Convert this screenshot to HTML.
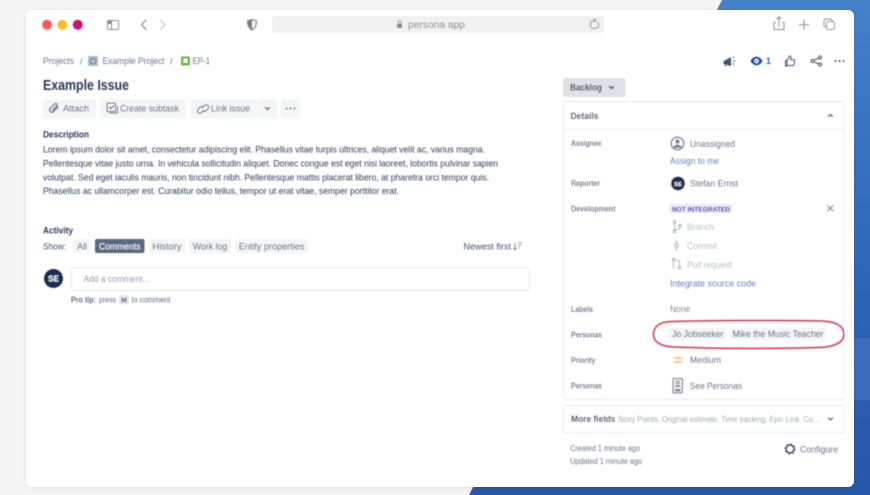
<!DOCTYPE html>
<html lang="en"><head><meta charset="utf-8"><title>persona app</title>
<style>
html,body{margin:0;padding:0;width:870px;height:495px;overflow:hidden;background:#f5f5f5}
svg{display:block;font-family:"Liberation Sans",Arial,sans-serif}
text{font-size:9px;fill:#253858}
.b{font-weight:700}
.g{fill:#6b778c}
.f{fill:#42526e}
.l{fill:#2f62c9}
.d{fill:#b3bac5}
.s{fill:none;stroke:#42526e;stroke-width:1;stroke-linecap:round;stroke-linejoin:round}
.t{fill:none;stroke:#8a8d91;stroke-width:1;stroke-linecap:round;stroke-linejoin:round}
.m{fill:none;stroke:#a5adba;stroke-width:1;stroke-linecap:round;stroke-linejoin:round}
</style></head><body>
<svg width="870" height="495" viewBox="0 0 870 495" xmlns="http://www.w3.org/2000/svg">
<defs>
<linearGradient id="bl" x1="0" y1="0" x2="0" y2="1"><stop offset="0" stop-color="#4480c8"/><stop offset=".55" stop-color="#2f66b8"/><stop offset="1" stop-color="#2656a8"/></linearGradient>
<filter id="soft" x="0" y="0" width="100%" height="100%"><feGaussianBlur stdDeviation="0.5"/></filter>
<filter id="sh" x="-5%" y="-5%" width="110%" height="110%"><feDropShadow dx="0" dy="1" stdDeviation="2" flood-color="#000" flood-opacity=".07"/></filter>
</defs>
<rect width="870" height="495" fill="#f5f5f5"/>
<polygon points="722,0 870,0 870,495 469,495" fill="url(#bl)"/>
<polygon points="854,338 870,338 870,400 854,400" fill="#4a79c4" opacity=".5"/>
<rect x="26" y="10" width="828" height="477" rx="6" fill="#fff" filter="url(#sh)"/>
<g filter="url(#soft)">
<!-- browser bar -->
<circle cx="47" cy="24.7" r="5" fill="#fc5c54"/><circle cx="62.3" cy="24.7" r="5" fill="#fbbb2e"/><circle cx="77.8" cy="24.7" r="5" fill="#c8176f"/>
<rect x="107.5" y="20.5" width="11" height="9" rx="1.5" class="t"/><rect x="108" y="21" width="3.5" height="3" fill="#8a8d91"/><path d="M111.5 21v8" class="t"/>
<path d="M146 20l-4.500 4.700 4.500 4.700" class="t" style="stroke-width:1.200"/><path d="M160.500 20l4.500 4.700-4.500 4.700" fill="none" stroke="#c4c6c9" stroke-width="1.200" stroke-linecap="round" stroke-linejoin="round"/>
<path d="M252 19.500l4.500 1.500c0 4-1 7-4.500 9-3.500-2-4.500-5-4.500-9z" fill="none" stroke="#7a7d80" stroke-width="1.100"/><path d="M252 19.500l-4.500 1.500c0 4 1 7 4.500 9z" fill="#7a7d80"/>
<rect x="272" y="16" width="332" height="17" rx="3" fill="#f2f2f2"/>
<rect x="397" y="23.500" width="5" height="4.500" rx=".8" fill="#85888c"/><path d="M398 23.500v-1.200a1.500 1.500 0 0 1 3 0v1.200" fill="none" stroke="#85888c" stroke-width=".8"/>
<text x="408" y="27.800" textLength="57" lengthAdjust="spacingAndGlyphs" style="fill:#808387;font-size:10px">persona app</text>
<path d="M597.800 22a4.200 4.200 0 1 1-3.300-1.700" class="t"/><path d="M594 18.500l2.200 1.800-2.200 1.900" class="t" style="stroke-width:.9"/>
<path d="M775.500 22.500h-1.500v7h10v-7h-1.500M779 26v-9M776.700 19l2.300-2.300 2.300 2.300" class="t"/>
<path d="M804 20v9.500M799.300 24.700h9.500" class="t"/>
<rect x="824" y="19" width="8" height="8" rx="2" class="t"/><rect x="826.500" y="21.500" width="8" height="8" rx="2" fill="#fff" stroke="#8a8d91"/>
<!-- breadcrumb -->
<text x="43" y="64" textLength="31" lengthAdjust="spacingAndGlyphs" class="g">Projects</text>
<text x="80" y="64.300" class="g">/</text>
<rect x="88" y="56" width="10" height="10" rx="1" fill="#7fd3ee"/><circle cx="93" cy="61" r="3" fill="none" stroke="#e0604f" stroke-width="1.600"/>
<text x="102.500" y="64" textLength="62" lengthAdjust="spacingAndGlyphs" class="g">Example Project</text>
<text x="170" y="64.300" class="g">/</text>
<rect x="181" y="56.500" width="9" height="9" rx="1" fill="#63ba3c"/><path d="M183.500 58.500h4v5l-2-1.300-2 1.300z" fill="#fff"/>
<text x="192.500" y="64" textLength="17.500" lengthAdjust="spacingAndGlyphs" class="g">EP-1</text>
<!-- right actions -->
<path d="M724 61.500l6.500-3.500v7.500l-6.500-2zM726 63.500l-.8 3M732.500 58l1.500-1M733 61h2M732.500 63.500l1.500 1" fill="#42526e" stroke="#42526e" stroke-width="1" stroke-linejoin="round"/>
<path d="M750.500 61c1.500-3 3.700-4.300 6-4.300s4.500 1.300 6 4.300c-1.500 3-3.700 4.300-6 4.300s-4.500-1.300-6-4.300z" fill="#1f4da8"/><circle cx="756.500" cy="61" r="2.200" fill="#fff"/><circle cx="756.500" cy="61" r="1" fill="#1f4da8"/>
<text x="766" y="64" textLength="5" lengthAdjust="spacingAndGlyphs" class="b" style="fill:#2f62c9">1</text>
<path d="M787 60.500h-1.500v5.500h1.500zM787 60.500l2.500-4.500c1.500 0 1.800 1 1.500 2l-.5 1.800h3.300c.8 0 1 .7.9 1.300l-.8 3.700c-.1.500-.5.700-1 .7h-6.400" class="s"/>
<circle cx="820" cy="57.500" r="1.500" class="s"/><circle cx="820" cy="64.500" r="1.500" class="s"/><circle cx="812.500" cy="61" r="1.500" class="s"/><path d="M814 60.200l4.700-2.200M814 61.800l4.700 2.200" class="s"/>
<circle cx="835.500" cy="61" r="1" fill="#42526e"/><circle cx="839.500" cy="61" r="1" fill="#42526e"/><circle cx="843.500" cy="61" r="1" fill="#42526e"/>
<!-- title -->
<text x="43" y="90" textLength="86" lengthAdjust="spacingAndGlyphs" style="font-size:14.500px;font-weight:700;fill:#2b3a5a">Example Issue</text>
<!-- toolbar -->
<rect x="43" y="99" width="53" height="19" rx="2" fill="#f4f5f7"/>
<path d="M58 107l-4.800 4.800a2.300 2.300 0 0 1-3.200-3.200l4.700-4.700a1.500 1.500 0 0 1 2.100 2.100l-4.300 4.300" class="s" style="stroke:#5e6c84;stroke-width:1.300"/>
<text x="63" y="111.700" textLength="26" lengthAdjust="spacingAndGlyphs" class="f">Attach</text>
<rect x="100" y="99" width="86" height="19" rx="2" fill="#f4f5f7"/>
<rect x="107" y="103" width="8.500" height="8.500" rx="1" class="s"/><path d="M109 107l1.800 1.800 3-3.300M117.500 106.500v6.500h-8" class="s"/>
<text x="120" y="111.700" textLength="59" lengthAdjust="spacingAndGlyphs" class="f">Create subtask</text>
<rect x="191" y="99" width="66" height="19" rx="2" fill="#f4f5f7"/><rect x="258" y="99" width="19" height="19" rx="2" fill="#f4f5f7"/>
<path d="M202.500 107.500l2-2a2.400 2.400 0 0 1 3.400 3.400l-2 2a2.400 2.400 0 0 1-3-.3M203.500 110.500l-2 2a2.400 2.400 0 0 1-3.400-3.400l2-2a2.400 2.400 0 0 1 3 .3" class="s"/>
<text x="211" y="111.700" textLength="39" lengthAdjust="spacingAndGlyphs" class="f">Link issue</text>
<path d="M265.500 107.500l2 2 2-2" class="s" style="stroke-width:1.300"/>
<rect x="281" y="99" width="19" height="19" rx="2" fill="#f4f5f7"/>
<circle cx="286.500" cy="108.500" r="1" fill="#42526e"/><circle cx="290.500" cy="108.500" r="1" fill="#42526e"/><circle cx="294.500" cy="108.500" r="1" fill="#42526e"/>
<!-- description -->
<text x="43" y="137.500" textLength="46" lengthAdjust="spacingAndGlyphs" class="b" style="fill:#2b3a5a">Description</text>
<text x="43" y="152.500" textLength="442" lengthAdjust="spacingAndGlyphs" style="font-size:8.800px;fill:#2f3d5a">Lorem ipsum dolor sit amet, consectetur adipiscing elit. Phasellus vitae turpis ultrices, aliquet velit ac, varius magna.</text>
<text x="43" y="166.500" textLength="455" lengthAdjust="spacingAndGlyphs" style="font-size:8.800px;fill:#2f3d5a">Pellentesque vitae justo urna. In vehicula sollicitudin aliquet. Donec congue est eget nisi laoreet, lobortis pulvinar sapien</text>
<text x="43" y="180.500" textLength="446" lengthAdjust="spacingAndGlyphs" style="font-size:8.800px;fill:#2f3d5a">volutpat. Sed eget iaculis mauris, non tincidunt nibh. Pellentesque mattis placerat libero, at pharetra orci tempor quis.</text>
<text x="43" y="194" textLength="356" lengthAdjust="spacingAndGlyphs" style="font-size:8.800px;fill:#2f3d5a">Phasellus ac ullamcorper est. Curabitur odio tellus, tempor ut erat vitae, semper porttitor erat.</text>
<!-- activity -->
<text x="43" y="233.300" textLength="30" lengthAdjust="spacingAndGlyphs" class="b" style="fill:#2b3a5a">Activity</text>
<text x="43" y="249.300" textLength="23" lengthAdjust="spacingAndGlyphs" class="f">Show:</text>
<rect x="73.500" y="239" width="17" height="14" rx="2" fill="#f4f5f7"/><text x="77" y="249.300" textLength="10" lengthAdjust="spacingAndGlyphs" class="f">All</text>
<rect x="95" y="239" width="49.500" height="14" rx="2" fill="#5a6885"/><text x="99" y="249.300" textLength="41.500" lengthAdjust="spacingAndGlyphs" style="fill:#fff">Comments</text>
<rect x="149" y="239" width="36" height="14" rx="2" fill="#f4f5f7"/><text x="152.500" y="249.300" textLength="29" lengthAdjust="spacingAndGlyphs" class="f">History</text>
<rect x="189" y="239" width="42" height="14" rx="2" fill="#f4f5f7"/><text x="192.800" y="249.300" textLength="34.500" lengthAdjust="spacingAndGlyphs" class="f">Work log</text>
<rect x="235" y="239" width="73" height="14" rx="2" fill="#f4f5f7"/><text x="238.800" y="249.300" textLength="65.500" lengthAdjust="spacingAndGlyphs" class="f">Entity properties</text>
<text x="463.500" y="249.300" textLength="47.500" lengthAdjust="spacingAndGlyphs" class="f">Newest first</text>
<path d="M515 243v6.500M513.300 248l1.700 1.800 1.700-1.800M518 243h4M518 245.500h3M518 248h1.500" fill="none" stroke="#6b778c" stroke-width=".8"/>
<circle cx="53.500" cy="278.500" r="9.500" fill="#1d2d54"/><text x="53.500" y="281.500" text-anchor="middle" class="b" style="fill:#fff;font-size:8px">SE</text>
<rect x="71.500" y="267.500" width="458" height="23" rx="2.500" fill="#fff" stroke="#e4e6ea"/>
<text x="83.500" y="282" textLength="66" lengthAdjust="spacingAndGlyphs" style="fill:#8993a4">Add a comment...</text>
<text x="71" y="302.500" textLength="25" lengthAdjust="spacingAndGlyphs" class="b" style="font-size:8px;fill:#5e6c84">Pro tip:</text>
<text x="99" y="302.500" textLength="17" lengthAdjust="spacingAndGlyphs" style="font-size:8px;fill:#5e6c84">press</text>
<rect x="119" y="295" width="10" height="9.500" rx="1.500" fill="#e6e8ec"/><text x="124" y="302.500" text-anchor="middle" class="b" style="font-size:7px;fill:#42526e">M</text>
<text x="131.500" y="302.500" textLength="39" lengthAdjust="spacingAndGlyphs" style="font-size:8px;fill:#5e6c84">to comment</text>
<!-- right column -->
<rect x="563" y="78" width="62.500" height="19" rx="2" fill="#dfe1e6"/>
<text x="570" y="90.700" textLength="32" lengthAdjust="spacingAndGlyphs" class="b" style="fill:#33415f">Backlog</text>
<path d="M609.500 86.500l2 2 2-2" class="s" style="stroke-width:1.300;stroke:#253858"/>
<rect x="563.500" y="101.500" width="281" height="298" rx="2.500" fill="#fff" stroke="#e6e8ec"/>
<path d="M564 129h280" stroke="#eceef1"/>
<text x="570.500" y="118.800" textLength="28" lengthAdjust="spacingAndGlyphs" class="b" style="fill:#33415f">Details</text>
<path d="M828.500 116.500l2-2 2 2" class="s" style="stroke-width:1.300"/>
<text x="571" y="146" textLength="30.500" lengthAdjust="spacingAndGlyphs" class="b" style="font-size:8px;fill:#5e6c84">Assignee</text>
<circle cx="677.500" cy="143.500" r="6.300" fill="#fff" stroke="#7a869a" stroke-width="1.500"/><circle cx="677.500" cy="141.500" r="2.300" fill="#7a869a"/><path d="M673 148c.6-2.500 2.500-3.500 4.500-3.500s3.900 1 4.500 3.500z" fill="#7a869a"/>
<text x="690" y="147" textLength="45" lengthAdjust="spacingAndGlyphs" class="f">Unassigned</text>
<text x="670" y="164" textLength="49" lengthAdjust="spacingAndGlyphs" class="l">Assign to me</text>
<text x="571" y="186" textLength="29" lengthAdjust="spacingAndGlyphs" class="b" style="font-size:8px;fill:#5e6c84">Reporter</text>
<circle cx="678" cy="183.500" r="7" fill="#1d2d54"/><text x="678" y="185.800" text-anchor="middle" class="b" style="fill:#fff;font-size:5.800px">SE</text>
<text x="690" y="186.500" textLength="48" lengthAdjust="spacingAndGlyphs" class="f">Stefan Ernst</text>
<text x="571" y="211.500" textLength="44.500" lengthAdjust="spacingAndGlyphs" class="b" style="font-size:8px;fill:#5e6c84">Development</text>
<rect x="670" y="204" width="62" height="9" rx="1.500" fill="#eae6ff"/>
<text x="672" y="211.300" textLength="58" lengthAdjust="spacingAndGlyphs" class="b" style="font-size:6.800px;fill:#403294">NOT INTEGRATED</text>
<path d="M827.500 205.500l5.500 5.500M833 205.500l-5.500 5.500" class="s" style="stroke:#5e6c84"/>
<circle cx="674.500" cy="222" r="1.300" class="m"/><circle cx="674.500" cy="231.500" r="1.300" class="m"/><circle cx="680" cy="225.500" r="1.300" class="m"/><path d="M674.500 223.300v7M680 226.800c0 2-2 2.500-5 3" class="m"/>
<text x="687" y="230" textLength="27" lengthAdjust="spacingAndGlyphs" class="d">Branch</text>
<circle cx="676.500" cy="245.500" r="1.800" class="m"/><path d="M676.500 240.500v3M676.500 247.300v3.200" class="m"/>
<text x="687" y="249" textLength="30" lengthAdjust="spacingAndGlyphs" class="d">Commit</text>
<circle cx="673.500" cy="259.500" r="1.300" class="m"/><circle cx="679.500" cy="267.500" r="1.300" class="m"/><path d="M673.500 261v7M679.500 266v-3.500c0-1.500-1-2.500-2.500-2.500h-1" class="m"/>
<text x="687" y="268" textLength="45" lengthAdjust="spacingAndGlyphs" class="d">Pull request</text>
<text x="670" y="286.500" textLength="86" lengthAdjust="spacingAndGlyphs" class="l">Integrate source code</text>
<text x="571" y="311.800" textLength="22" lengthAdjust="spacingAndGlyphs" class="b" style="font-size:8px;fill:#5e6c84">Labels</text>
<text x="670" y="312" textLength="20" lengthAdjust="spacingAndGlyphs" class="g">None</text>
<text x="571" y="337.300" textLength="31" lengthAdjust="spacingAndGlyphs" class="b" style="font-size:8px;fill:#5e6c84">Personas</text>
<rect x="670" y="328" width="55.500" height="12" rx="2" fill="#f4f5f7"/><text x="672" y="337" textLength="51.500" lengthAdjust="spacingAndGlyphs" class="f">Jo Jobseeker</text>
<rect x="730" y="328" width="96" height="12" rx="2" fill="#f4f5f7"/><text x="732.500" y="337" textLength="91" lengthAdjust="spacingAndGlyphs" class="f">Mike the Music Teacher</text>
<path d="M672 321.500c40-1 110-1.500 150-.5 14 .5 22 5 22 13.500 0 8-10 12.500-25 13-45 1.200-105 1.200-145-.5-13-.5-20.500-5-20.500-12.500 0-8.500 7-13 18.500-13z" fill="none" stroke="#dc3f5e" stroke-width="2"/>
<text x="571" y="363" textLength="24.500" lengthAdjust="spacingAndGlyphs" class="b" style="font-size:8px;fill:#5e6c84">Priority</text>
<path d="M674.500 358h7M674.500 362h7" stroke="#ffab3d" stroke-width="1.400" stroke-linecap="round"/>
<text x="690" y="363" textLength="31" lengthAdjust="spacingAndGlyphs" class="f">Medium</text>
<text x="571" y="388.500" textLength="31" lengthAdjust="spacingAndGlyphs" class="b" style="font-size:8px;fill:#5e6c84">Personas</text>
<rect x="673" y="378.500" width="9.500" height="14.500" rx="1.200" fill="#eef0f3" stroke="#42526e"/><circle cx="677.800" cy="382.500" r="1.500" fill="none" stroke="#42526e" stroke-width=".8"/><path d="M675 387c.5-1.500 1.500-2 2.800-2s2.300.5 2.800 2zM675 389h5.600v2.500H675z" fill="#7a869a"/>
<text x="690" y="389" textLength="52" lengthAdjust="spacingAndGlyphs" class="f">See Personas</text>
<rect x="563.500" y="405.500" width="281" height="27" rx="2.500" fill="#fff" stroke="#e6e8ec"/>
<text x="571" y="422" textLength="44.500" lengthAdjust="spacingAndGlyphs" class="b" style="fill:#33415f">More fields</text>
<text x="618" y="421.800" textLength="201" lengthAdjust="spacingAndGlyphs" style="font-size:8px;fill:#97a0af">Story Points, Original estimate, Time tracking, Epic Link, Co...</text>
<path d="M828.500 418l2 2 2-2" class="s" style="stroke-width:1.300"/>
<text x="570" y="450.800" textLength="70" lengthAdjust="spacingAndGlyphs" style="font-size:8px;fill:#6b778c">Created 1 minute ago</text>
<text x="570" y="463.800" textLength="72" lengthAdjust="spacingAndGlyphs" style="font-size:8px;fill:#6b778c">Updated 1 minute ago</text>
<circle cx="790" cy="449" r="4" fill="none" stroke="#42526e" stroke-width="1.500"/><circle cx="790" cy="449" r="5" fill="none" stroke="#42526e" stroke-width="1.200" stroke-dasharray="1.600 2.330"/>
<text x="800" y="452.500" textLength="38" lengthAdjust="spacingAndGlyphs" class="g">Configure</text>
</g>
</svg>
</body></html>
